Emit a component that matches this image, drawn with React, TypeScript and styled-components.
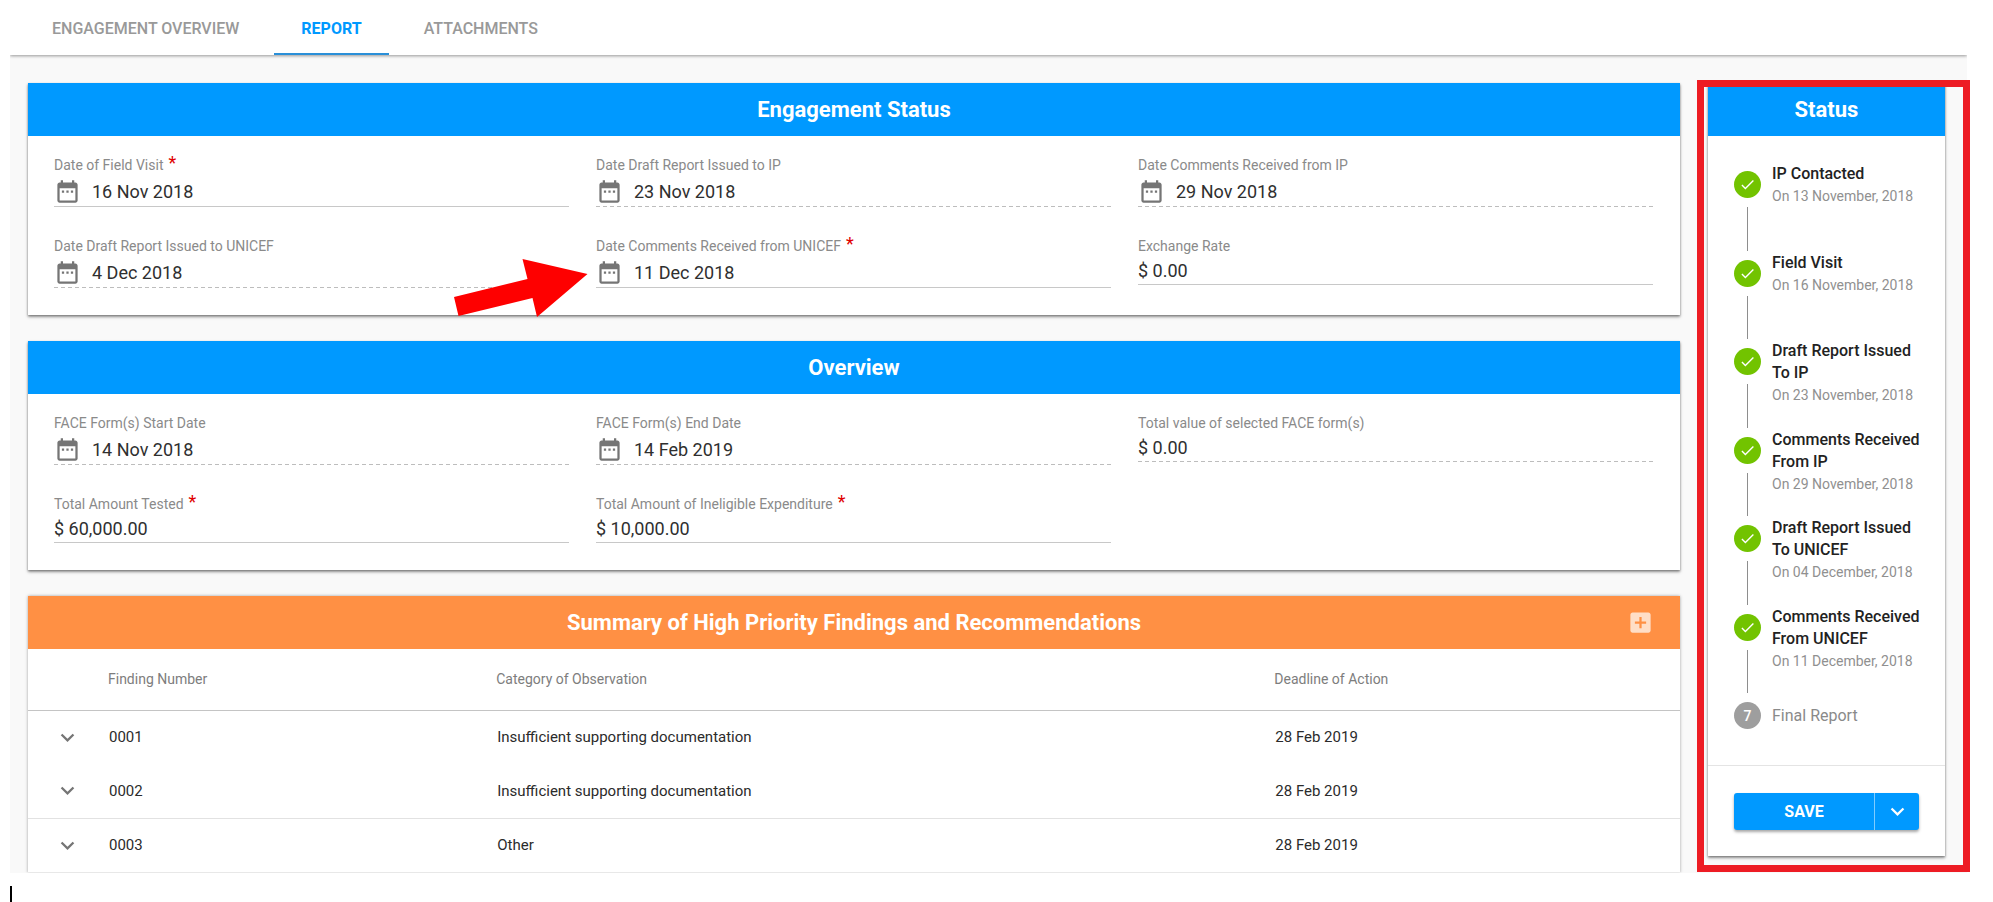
import React from "react";
import styled, { createGlobalStyle, css } from "styled-components";

const blue = "#0099ff";
const orange = "#ff9044";

const GlobalStyle = createGlobalStyle`
  *, *::before, *::after { box-sizing: border-box; }
  body {
    margin: 0;
    background: #fff;
    color: #2b2b2b;
    font-family: Roboto, "Liberation Sans", sans-serif;
  }
  button, input { font-family: inherit; }
`;

const Page = styled.div`
  padding: 0 26px 0 10px;
`;

const TabBar = styled.nav`
  position: relative;
  display: flex;
  gap: 8px;
  height: 55px;
  padding: 0 15px;
  background: #fff;
  box-shadow: 0 1px 3px rgba(0, 0, 0, 0.4);
  clip-path: inset(0 0 -6px 0);
`;

const Tab = styled.a<{ $active?: boolean }>`
  display: flex;
  align-items: center;
  padding: 4px 27px 0;
  border-bottom: 2px solid ${(p) => (p.$active ? "#2a8fd8" : "transparent")};
  color: ${(p) => (p.$active ? blue : "#999")};
  font-size: 16px;
  font-weight: ${(p) => (p.$active ? 700 : 500)};
  text-decoration: none;
`;

const Content = styled.div`
  display: grid;
  grid-template-columns: minmax(0, 1fr) 237px;
  align-items: start;
  gap: 28px;
  padding: 28px 22px 0 18px;
  background: #f9f9f9;
`;

const MainColumn = styled.main`
  display: grid;
  gap: 26px;
`;

const Card = styled.section<{ $open?: boolean }>`
  position: relative;
  background: #fff;
  box-shadow: ${(p) =>
    p.$open
      ? "0 0 3px rgba(0, 0, 0, 0.35)"
      : "0 2px 3px rgba(0, 0, 0, 0.35), 0 1px 2px rgba(0, 0, 0, 0.3)"};
  ${(p) => p.$open && css`clip-path: inset(-4px -4px 0 -4px);`}
`;

const CardHeader = styled.header<{ $tone?: string }>`
  display: grid;
  grid-template-columns: 27px 1fr 27px;
  align-items: center;
  height: 53px;
  padding: 0 26px;
  background: ${(p) => p.$tone ?? blue};
`;

const CardTitle = styled.h2`
  grid-column: 2;
  margin: 0;
  color: #fff;
  font-size: 22px;
  font-weight: 700;
  line-height: 30px;
  text-align: center;
`;

const IconButton = styled.button`
  display: grid;
  place-items: center;
  width: 27px;
  height: 27px;
  padding: 0;
  border: 0;
  background: none;
  color: inherit;
`;

const AddButton = styled(IconButton)`
  color: rgba(255, 255, 255, 0.7);
`;

const FieldGrid = styled.div`
  display: grid;
  grid-template-columns: repeat(3, minmax(0, 1fr));
  align-items: start;
  gap: 29px 27px;
  padding: 19px 27px 27px 26px;
`;

const FieldBox = styled.div`
  display: flex;
  flex-direction: column;
`;

const FieldLabel = styled.label`
  display: flex;
  gap: 5px;
  height: 20px;
  color: #8a8a8a;
  font-size: 14px;
  line-height: 20px;
`;

const Required = styled.span`
  color: #e00000;
  font-size: 18px;
  line-height: 16px;
`;

const FieldLine = styled.div<{ $locked?: boolean; $date?: boolean }>`
  display: flex;
  align-items: center;
  gap: 11px;
  height: ${(p) => (p.$date ? 32 : 29)}px;
  color: #757575;
  ${(p) =>
    p.$locked
      ? css`
          background: repeating-linear-gradient(90deg, #bdbdbd 0 4px, transparent 4px 7px) bottom / 100% 1px no-repeat;
        `
      : css`
          background: linear-gradient(#c8c8c8, #c8c8c8) bottom / 100% 1px no-repeat;
        `}
`;

const FieldInput = styled.input`
  flex: 1;
  min-width: 0;
  height: 28px;
  padding: 0;
  border: 0;
  outline: 0;
  background: none;
  color: #2f2f2f;
  font-size: 18px;
`;

const Table = styled.table`
  width: 100%;
  border-collapse: collapse;
  table-layout: fixed;
`;

const HeadCell = styled.th`
  height: 61px;
  padding: 0;
  border-bottom: 1px solid #c4c4c4;
  color: #7d7d7d;
  font-size: 14px;
  font-weight: 400;
  text-align: left;
`;

const Row = styled.tr<{ $line?: boolean }>`
  height: 54px;
  border-bottom: ${(p) => (p.$line ? "1px solid #e2e2e2" : "0")};
`;

const Cell = styled.td`
  padding: 0 0 0 1px;
  color: #2b2b2b;
  font-size: 15px;
`;

const ToggleCell = styled(Cell)`
  padding-left: 26px;
  color: #757575;
`;

const Sidebar = styled.aside`
  position: relative;

  &::after {
    content: "";
    position: absolute;
    inset: -3px -25px -16px -11px;
    border: 7px solid #ed1c24;
    pointer-events: none;
  }
`;

const Steps = styled.ol`
  display: flex;
  flex-direction: column;
  min-height: 566px;
  margin: 0;
  padding: 0 20px 0 26px;
  list-style: none;
`;

const Step = styled.li`
  display: flex;
  gap: 11px;

  &:not(:last-child) { flex: 1 0 0px; }
`;

const StepRail = styled.div`
  display: flex;
  flex-direction: column;
  align-items: center;
  padding-top: 8px;
`;

const Marker = styled.span<{ $done?: boolean }>`
  display: grid;
  place-items: center;
  width: 27px;
  height: 27px;
  border-radius: 50%;
  background: ${(p) => (p.$done ? "#72c300" : "#9e9e9e")};
  color: #fff;
  font-size: 14px;
  font-weight: 500;
`;

const Connector = styled.span`
  flex: 1;
  width: 1px;
  margin: 9px 0 1px;
  background: #8e8e8e;
`;

const StepTitle = styled.h3`
  margin: 0;
  color: #222;
  font-size: 16px;
  font-weight: 500;
  line-height: 22px;
`;

const StepDate = styled.p`
  margin: 0;
  color: #909090;
  font-size: 14px;
  line-height: 22px;
`;

const PendingTitle = styled(StepTitle)`
  padding-top: 8px;
  color: #8a8a8a;
  font-weight: 400;
  line-height: 27px;
`;

const StatusBody = styled.div`
  padding: 27px 0 36px;
`;

const Actions = styled.div`
  padding: 27px 26px 26px;
  border-top: 1px solid #e4e4e4;
`;

const SplitButton = styled.div`
  display: flex;
  height: 37px;
  border-radius: 3px;
  background: ${blue};
  box-shadow: 0 2px 3px rgba(0, 0, 0, 0.35);
`;

const SaveButton = styled.button`
  flex: 1;
  padding: 0;
  border: 0;
  border-right: 1px solid #7fccff;
  background: none;
  color: #fff;
  font-size: 16px;
  font-weight: 700;
`;

const MenuButton = styled(IconButton)`
  width: 44px;
  height: 37px;
  color: #fff;
`;

const Arrow = styled.svg`
  position: absolute;
  top: 176px;
  left: 426px;
`;

const TextCaret = styled.div`
  width: 2px;
  height: 16px;
  margin-top: 13px;
  background: #000;
`;

const Glyph = ({ d, size = 27 }: { d: string; size?: number }) => (
  <svg width={size} height={size} viewBox="0 0 24 24" fill="currentColor" aria-hidden="true">
    <path d={d} />
  </svg>
);

const calendarPath =
  "M9 11H7v2h2v-2zm4 0h-2v2h2v-2zm4 0h-2v2h2v-2zm2-7h-1V2h-2v2H8V2H6v2H5c-1.11 0-1.99.9-1.99 2L3 20c0 1.1.89 2 2 2h14c1.1 0 2-.9 2-2V6c0-1.1-.9-2-2-2zm0 16H5V9h14v11z";
const chevronPath = "M16.59 8.59L12 13.17 7.41 8.59 6 10l6 6 6-6z";
const addBoxPath =
  "M19 3H5c-1.11 0-2 .9-2 2v14c0 1.1.89 2 2 2h14c1.1 0 2-.9 2-2V5c0-1.1-.9-2-2-2zm-2 10h-4v4h-2v-4H7v-2h4V7h2v4h4v2z";
const checkPath = "M9 16.17L4.83 12l-1.42 1.41L9 19 21 7l-1.41-1.41z";

type FieldData = { id: string; label: string; value: string; date?: boolean; required?: boolean; locked?: boolean };

const statusFields: FieldData[] = [
  { id: "field-visit", label: "Date of Field Visit", value: "16 Nov 2018", date: true, required: true },
  { id: "draft-ip", label: "Date Draft Report Issued to IP", value: "23 Nov 2018", date: true, locked: true },
  { id: "comments-ip", label: "Date Comments Received from IP", value: "29 Nov 2018", date: true, locked: true },
  { id: "draft-unicef", label: "Date Draft Report Issued to UNICEF", value: "4 Dec 2018", date: true, locked: true },
  { id: "comments-unicef", label: "Date Comments Received from UNICEF", value: "11 Dec 2018", date: true, required: true },
  { id: "exchange-rate", label: "Exchange Rate", value: "$ 0.00" },
];

const overviewFields: FieldData[] = [
  { id: "face-start", label: "FACE Form(s) Start Date", value: "14 Nov 2018", date: true, locked: true },
  { id: "face-end", label: "FACE Form(s) End Date", value: "14 Feb 2019", date: true, locked: true },
  { id: "face-total", label: "Total value of selected FACE form(s)", value: "$ 0.00", locked: true },
  { id: "tested", label: "Total Amount Tested", value: "$ 60,000.00", required: true },
  { id: "ineligible", label: "Total Amount of Ineligible Expenditure", value: "$ 10,000.00", required: true },
];

const findings = [
  { number: "0001", category: "Insufficient supporting documentation", deadline: "28 Feb 2019" },
  { number: "0002", category: "Insufficient supporting documentation", deadline: "28 Feb 2019", line: true },
  { number: "0003", category: "Other", deadline: "28 Feb 2019", line: true },
];

const completedSteps = [
  { title: "IP Contacted", date: "On 13 November, 2018" },
  { title: "Field Visit", date: "On 16 November, 2018" },
  { title: "Draft Report Issued To IP", date: "On 23 November, 2018" },
  { title: "Comments Received From IP", date: "On 29 November, 2018" },
  { title: "Draft Report Issued To UNICEF", date: "On 04 December, 2018" },
  { title: "Comments Received From UNICEF", date: "On 11 December, 2018" },
];

const Field = ({ id, label, value, date, required, locked }: FieldData) => (
  <FieldBox>
    <FieldLabel htmlFor={id}>
      {label}
      {required && <Required>*</Required>}
    </FieldLabel>
    <FieldLine $date={date} $locked={locked}>
      {date && <Glyph d={calendarPath} />}
      <FieldInput id={id} defaultValue={value} readOnly={locked} required={required} />
    </FieldLine>
  </FieldBox>
);

export default function App() {
  return (
    <>
      <GlobalStyle />
      <Page>
        <TabBar>
          <Tab href="#overview">ENGAGEMENT OVERVIEW</Tab>
          <Tab href="#report" $active aria-current="page">REPORT</Tab>
          <Tab href="#attachments">ATTACHMENTS</Tab>
        </TabBar>
        <Content>
          <MainColumn>
            <Card>
              <CardHeader><CardTitle>Engagement Status</CardTitle></CardHeader>
              <FieldGrid>
                {statusFields.map((f) => <Field key={f.id} {...f} />)}
              </FieldGrid>
              <Arrow width="134" height="58" viewBox="0 0 134 58" aria-hidden="true">
                <path d="M133.5 15 L68.5 0 L73.5 20 L0 38 L4.5 57 L78.5 39 L83 58 Z" fill="#fe0000" />
              </Arrow>
            </Card>
            <Card>
              <CardHeader><CardTitle>Overview</CardTitle></CardHeader>
              <FieldGrid>
                {overviewFields.map((f) => <Field key={f.id} {...f} />)}
              </FieldGrid>
            </Card>
            <Card $open>
              <CardHeader $tone={orange}>
                <CardTitle>Summary of High Priority Findings and Recommendations</CardTitle>
                <AddButton aria-label="Add finding"><Glyph d={addBoxPath} /></AddButton>
              </CardHeader>
              <Table>
                <colgroup>
                  <col style={{ width: 80 }} />
                  <col style={{ width: "23.5%" }} />
                  <col style={{ width: "47.1%" }} />
                  <col />
                </colgroup>
                <thead>
                  <tr>
                    <HeadCell aria-label="Expand" />
                    <HeadCell>Finding Number</HeadCell>
                    <HeadCell>Category of Observation</HeadCell>
                    <HeadCell>Deadline of Action</HeadCell>
                  </tr>
                </thead>
                <tbody>
                  {findings.map((f) => (
                    <Row key={f.number} $line={f.line}>
                      <ToggleCell>
                        <IconButton aria-label={`Expand ${f.number}`}><Glyph d={chevronPath} /></IconButton>
                      </ToggleCell>
                      <Cell>{f.number}</Cell>
                      <Cell>{f.category}</Cell>
                      <Cell>{f.deadline}</Cell>
                    </Row>
                  ))}
                </tbody>
              </Table>
            </Card>
          </MainColumn>
          <Sidebar>
            <Card>
              <CardHeader><CardTitle>Status</CardTitle></CardHeader>
              <StatusBody>
                <Steps>
                  {completedSteps.map((s) => (
                    <Step key={s.title}>
                      <StepRail>
                        <Marker $done><Glyph d={checkPath} size={17} /></Marker>
                        <Connector />
                      </StepRail>
                      <div>
                        <StepTitle>{s.title}</StepTitle>
                        <StepDate>{s.date}</StepDate>
                      </div>
                    </Step>
                  ))}
                  <Step>
                    <StepRail><Marker>7</Marker></StepRail>
                    <PendingTitle>Final Report</PendingTitle>
                  </Step>
                </Steps>
              </StatusBody>
              <Actions>
                <SplitButton>
                  <SaveButton>SAVE</SaveButton>
                  <MenuButton aria-label="More save options"><Glyph d={chevronPath} /></MenuButton>
                </SplitButton>
              </Actions>
            </Card>
          </Sidebar>
        </Content>
        <TextCaret />
      </Page>
    </>
  );
}
